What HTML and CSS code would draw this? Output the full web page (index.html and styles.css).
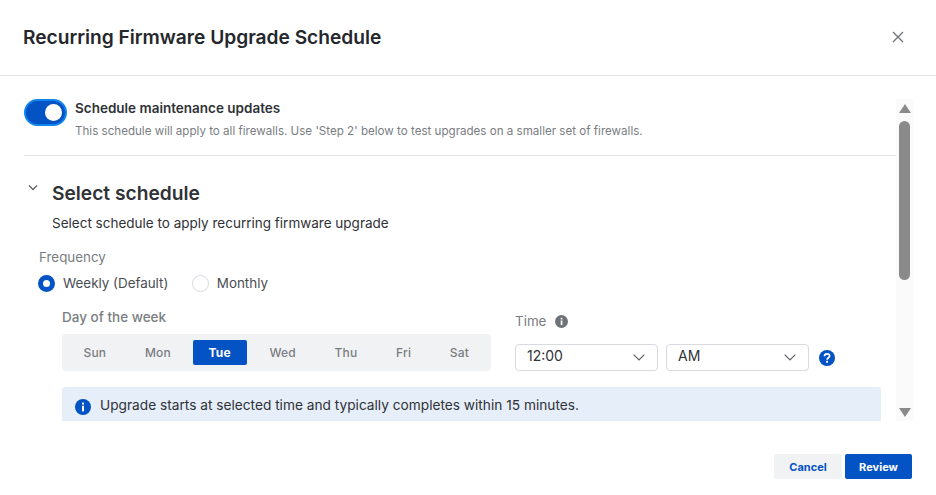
FILE: index.html
```html
<!DOCTYPE html>
<html lang="en">
<head>
<meta charset="utf-8">
<title>Recurring Firmware Upgrade Schedule</title>
<link rel="stylesheet" href="styles.css">
</head>
<body>
<div class="dialog">
  <header class="header">
    <h1 class="title">Recurring Firmware Upgrade Schedule</h1>
    <svg class="close" width="14" height="14" viewBox="0 0 14 14"><path d="M2 2l10 10M12 2L2 12" stroke="#6f7277" stroke-width="1.3" fill="none"/></svg>
  </header>
  <main class="main">
    <div class="content">
      <div class="toggle-row">
        <span class="toggle"><span class="knob"></span></span>
        <div class="toggle-text">
          <div class="toggle-title">Schedule maintenance updates</div>
          <div class="toggle-sub">This schedule will apply to all firewalls. Use 'Step 2' below to test upgrades on a smaller set of firewalls.</div>
        </div>
      </div>
      <div class="section-head">
        <svg class="chev" width="12" height="8" viewBox="0 0 12 8"><path d="M2 1.5l4 4 4-4" stroke="#5f6368" stroke-width="1.3" fill="none"/></svg>
        <h2 class="section-title">Select schedule</h2>
      </div>
      <p class="section-desc">Select schedule to apply recurring firmware upgrade</p>
      <div class="freq-label">Frequency</div>
      <div class="radios">
        <span class="radio on"></span><span class="radio-label">Weekly (Default)</span>
        <span class="radio off"></span><span class="radio-label">Monthly</span>
      </div>
      <div class="schedule-row">
        <div class="day-col">
          <div class="day-label">Day of the week</div>
          <div class="days">
            <span class="day">Sun</span><span class="day">Mon</span><span class="day active">Tue</span><span class="day">Wed</span><span class="day">Thu</span><span class="day">Fri</span><span class="day">Sat</span>
          </div>
        </div>
        <div class="time-col">
          <div class="time-label">Time
            <svg class="time-info" width="13" height="13" viewBox="0 0 13 13"><circle cx="6.5" cy="6.5" r="6.5" fill="#6f7277"/><rect x="5.7" y="5.5" width="1.7" height="4.6" fill="#fff"/><rect x="5.7" y="2.9" width="1.7" height="1.6" fill="#fff"/></svg>
          </div>
          <div class="selects">
            <div class="select"><span>12:00</span><svg width="12" height="7" viewBox="0 0 12 7"><path d="M.7.7L6 6l5.3-5.3" stroke="#5f6368" stroke-width="1.2" fill="none"/></svg></div>
            <div class="select"><span>AM</span><svg width="12" height="7" viewBox="0 0 12 7"><path d="M.7.7L6 6l5.3-5.3" stroke="#5f6368" stroke-width="1.2" fill="none"/></svg></div>
            <svg class="help" width="16" height="16" viewBox="0 0 16 16"><circle cx="8" cy="8" r="8" fill="#0353c4"/><path d="M5.5 6.2c0-1.5 1.1-2.4 2.6-2.4s2.5.9 2.5 2.1c0 1.9-2.5 1.9-2.5 3.9" stroke="#fff" stroke-width="1.7" fill="none"/><rect x="7.1" y="10.8" width="1.9" height="1.9" fill="#fff"/></svg>
          </div>
        </div>
      </div>
      <div class="banner">
        <svg class="banner-icon" width="16" height="16" viewBox="0 0 16 16"><circle cx="8" cy="8" r="8" fill="#0353c4"/><rect x="7" y="6.8" width="2" height="5.6" fill="#fff"/><rect x="7" y="3.6" width="2" height="2" fill="#fff"/></svg>
        <span>Upgrade starts at selected time and typically completes within 15 minutes.</span>
      </div>
    </div>
    <div class="scrollbar">
      <span class="arrow up"></span>
      <span class="thumb"></span>
      <span class="arrow down"></span>
    </div>
  </main>
  <footer class="footer">
    <button class="btn cancel">Cancel</button>
    <button class="btn review">Review</button>
  </footer>
</div>
</body>
</html>
```
FILE: styles.css
```css
* { box-sizing: border-box; }
html, body { margin: 0; background: #fff; }
body { font-family: Inter, "Liberation Sans", sans-serif; color: #2f3237; }
.dialog { width: 936px; height: 495px; display: flex; flex-direction: column; overflow: hidden; }
.header { height: 76px; flex: none; display: flex; align-items: center; justify-content: space-between; padding: 0 31px 2px 23px; border-bottom: 1px solid #e3e4e6; }
.title { margin: 0; font-size: 19.15px; line-height: 28px; font-weight: 600; color: #24272b; }
.main { height: 322px; margin: 23px 23px 0 24px; flex: none; display: flex; }
.content { flex: 1; min-width: 0; overflow: hidden; }
.toggle-row { display: flex; gap: 8px; height: 57px; border-bottom: 1px solid #e3e4e6; }
.toggle { width: 43px; height: 27px; flex: none; border-radius: 14px; background: #0353c4; border: 2px solid #0f86ee; display: flex; align-items: center; justify-content: flex-end; padding-right: 3px; }
.knob { width: 17px; height: 17px; border-radius: 50%; background: #fff; }
.toggle-title { font-size: 13.5px; line-height: 18px; font-weight: 600; color: #2f3237; }
.toggle-sub { margin-top: 6px; font-size: 11.6px; line-height: 16px; color: #7a7d82; }
.section-head { display: flex; align-items: center; margin-top: 23px; height: 28px; }
.chev { margin: -10px 0 0 3px; }
.section-title { margin: 0 0 0 13px; font-size: 19.2px; line-height: 28px; font-weight: 600; color: #2f3237; }
.section-desc { margin: 7px 0 0 28px; font-size: 13.5px; line-height: 18px; color: #2f3237; }
.freq-label { margin: 16px 0 0 15px; font-size: 13.4px; line-height: 18px; color: #7a7d82; }
.radios { display: flex; align-items: center; margin: 8px 0 0 14px; height: 18px; }
.radio { width: 17px; height: 17px; border-radius: 50%; flex: none; }
.radio.on { background: #fff; border: 5.5px solid #0353c4; }
.radio.off { background: #fff; border: 1.5px solid #d8dae0; }
.radio-label { margin: 0 23.5px 0 8px; font-size: 13.4px; color: #4a4d52; }
.schedule-row { display: flex; margin-left: 38px; }
.day-col { width: 429px; flex: none; margin-top: 16px; }
.day-label { font-size: 13.5px; line-height: 18px; font-weight: 500; color: #7a7d82; }
.days { margin-top: 8px; height: 37px; width: 429px; border-radius: 4px; background: #f1f2f4; display: flex; align-items: center; gap: 6.6px; padding-left: 5.5px; }
.day { height: 25px; padding: 0 16px; font-size: 12px; line-height: 25px; font-weight: 500; color: #7a7d82; border-radius: 2px; letter-spacing: .2px; }
.day.active { background: #0353c4; color: #fff; font-weight: 700; margin-left: -1px; }
.time-col { margin-left: 24px; margin-top: 20px; }
.time-label { display: flex; align-items: center; gap: 9px; font-size: 13.4px; line-height: 18px; color: #7a7d82; }
.selects { display: flex; align-items: center; gap: 8px; margin-top: 14px; }
.select { width: 143px; height: 27px; border: 1.5px solid #d8dae0; border-radius: 4px; display: flex; align-items: center; justify-content: space-between; padding: 0 12px 4px 11px; font-size: 14px; color: #2f3237; }
.select svg { margin-top: 4px; }
.help { margin: 1px 0 0 2px; }
.banner { margin: 16px 15px 0 38px; height: 48px; background: #e6eef9; border-radius: 3px 3px 0 0; display: flex; align-items: flex-start; gap: 9px; padding: 9px 0 0 13px; font-size: 13.7px; line-height: 18px; color: #2f3237; }
.banner-icon { margin-top: 3px; }
.scrollbar { width: 17px; flex: none; background: #fafafa; display: flex; flex-direction: column; align-items: center; padding: 5px 0 4px; }
.thumb { width: 11px; height: 159px; margin-top: 8px; border-radius: 5.5px; background: #8a8a8a; }
.arrow { width: 0; height: 0; border-left: 6px solid transparent; border-right: 6px solid transparent; }
.arrow.up { border-bottom: 9px solid #8a8a8a; }
.arrow.down { border-top: 9px solid #8a8a8a; margin-top: auto; }
.footer { display: flex; justify-content: flex-end; gap: 3px; padding: 33px 24px 0 0; }
.btn { height: 25px; width: 68px; border: 0; border-radius: 2px; font-family: inherit; font-size: 11px; font-weight: 700; padding: 0; }
.cancel { background: #f1f2f4; color: #0353c4; }
.review { background: #0353c4; color: #fff; width: 67px; }
```
